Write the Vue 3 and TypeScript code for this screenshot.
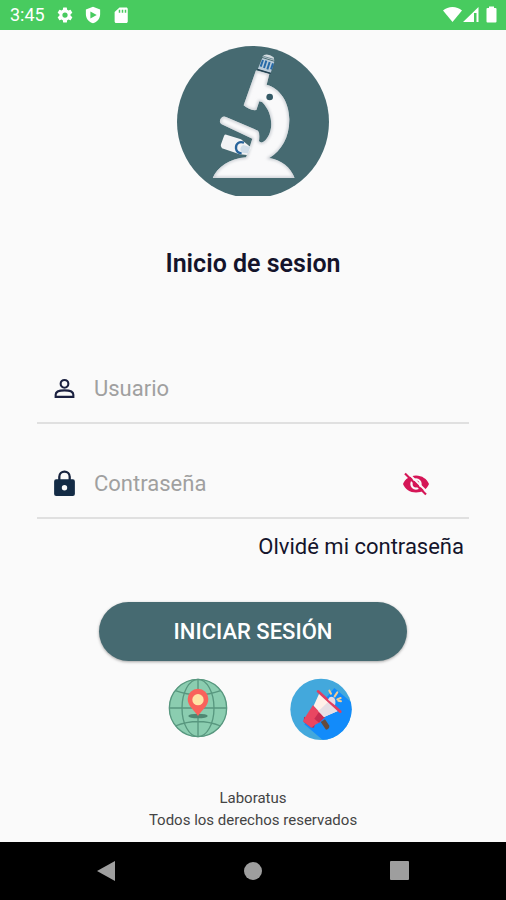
<script setup lang="ts">
import { ref } from 'vue'

const user = ref('')
const password = ref('')
const visible = ref(false)
</script>

<template>
  <div class="screen">
    <header class="status">
      <span class="time">3:45</span>
      <svg class="glyph" viewBox="0 0 24 24" aria-hidden="true">
        <path fill-rule="evenodd" d="M19.4 13a7.500 7.500 0 0 0 0-2l2.100-1.650a.5.5 0 0 0 .12-.64l-2-3.460a.5.5 0 0 0-.61-.22l-2.490 1a7.300 7.300 0 0 0-1.690-.98l-.38-2.650A.49.49 0 0 0 14 2h-4a.49.49 0 0 0-.49.420l-.38 2.650c-.61.250-1.170.59-1.690.98l-2.490-1a.49.49 0 0 0-.61.220l-2 3.460a.49.49 0 0 0 .12.640L4.570 11a7.900 7.900 0 0 0 0 2l-2.110 1.650a.5.5 0 0 0-.12.640l2 3.460c.12.220.39.300.61.220l2.490-1c.52.400 1.080.73 1.690.98l.38 2.650c.03.240.24.400.49.400h4c.25 0 .46-.18.49-.42l.38-2.650a7.700 7.700 0 0 0 1.690-.98l2.490 1c.23.090.49 0 .61-.22l2-3.460a.5.5 0 0 0-.12-.64zM12 15.500a3.500 3.500 0 1 1 0-7 3.500 3.500 0 0 1 0 7z" />
      </svg>
      <svg class="glyph" viewBox="0 0 24 24" aria-hidden="true">
        <path fill-rule="evenodd" d="M12 1 2.500 4.500V11c0 5.600 4 10.500 9.500 12 5.500-1.500 9.500-6.400 9.500-12V4.500zM8.500 7.200 17 12l-8.500 4.800z" />
      </svg>
      <svg class="glyph" viewBox="0 0 24 24" aria-hidden="true">
        <path fill-rule="evenodd" d="M19 2h-9L3.500 8v12.500c0 1.100.9 2 2 2H19c1.100 0 2-.9 2-2V4c0-1.100-.9-2-2-2zM9 5h2v4H9zm4 0h2v4h-2zm4 0h2v4h-2z" />
      </svg>
      <svg class="signals" viewBox="0 0 56 20" aria-hidden="true">
        <path d="M0 5.500C5 .8 14 .8 19 5.500L9.500 17z" />
        <path fill-rule="evenodd" d="M35.500 2v15H20zM31 8v9h2.500V8z" />
        <path d="M46 3V1.500h5V3h1.500q1 0 1 1v12.500q0 1-1 1h-8q-1 0-1-1V4q0-1 1-1z" />
      </svg>
    </header>

    <main class="content">
      <svg class="logo" viewBox="21 18 456 450" role="img" aria-label="Laboratus">
        <defs>
          <filter id="soft" x="-10%" y="-10%" width="120%" height="120%">
            <feGaussianBlur stdDeviation="5" />
          </filter>
          <clipPath id="scope">
            <path d="M258 91 298 102 290 134C330 145 357 185 358 237C359 290 335 332 298 354C335 360 362 382 374 414H128C142 381 178 356 228 352L232 342 240 318 247 296 155 253Q146 246 152 236Q158 227 168 231L264 272Q270 278 267 304Q276 312 286 301C309 277 313 225 277 187L268 184 259 210Q240 213 221 196Z" />
          </clipPath>
        </defs>
        <circle cx="249" cy="246" r="228" fill="#466a71" />
        <g clip-path="url(#scope)">
          <path fill="#f9f9fa" d="M120 80H380V420H120z" />
          <path class="shade" filter="url(#soft)" d="M258 91 298 102 290 134C330 145 357 185 358 237C359 290 335 332 298 354C335 360 362 382 374 414H128C142 381 178 356 228 352L232 342 240 318 247 296 155 253Q146 246 152 236Q158 227 168 231L264 272Q270 278 267 304Q276 312 286 301C309 277 313 225 277 187L268 184 259 210Q240 213 221 196Z" />
        </g>
        <path fill="#f1f2f4" d="m169 284 44 14 31 25-13 22-22-2-53-18q-6-5-3-12l9-25q2-5 7-4z" />
        <path fill="none" stroke="#28649b" stroke-width="7" d="M222 308c-15-5-25 3-24 17 1 9 8 14 17 15" />
        <path fill="#cfdde9" d="m219 315 22 6-7 19-18-2q-11-12 3-23z" />
        <circle cx="299" cy="171" r="10" fill="#355a66" />
        <path fill="#b9cbd8" d="m277 54 36 11-11 34-39-11z" />
        <path fill="none" stroke="#276aa7" stroke-width="6" d="m279 60-7 20m17-18-7 22m17-18-7 22m17-18-6 18" />
        <path fill="none" stroke="#233f50" stroke-width="4" d="m262 88 40 12" />
        <path fill="#d4dde1" d="m277 51 5-6q14-5 29 7l2 10z" />
        <path fill="none" stroke="#6f8d98" stroke-width="3" d="m280 49 31 9" />
      </svg>

      <h1 class="title">Inicio de sesion</h1>

      <form class="form" @submit.prevent>
        <div class="field">
          <label for="user" aria-label="Usuario">
            <svg class="icon" viewBox="0 0 24 24" aria-hidden="true">
              <g fill="none" stroke="#1b2140" stroke-width="2">
                <circle cx="12" cy="7.500" r="3.700" />
                <path d="M3.500 20v-2c0-3 4.500-4.200 8.500-4.200s8.500 1.200 8.500 4.200v2z" />
              </g>
            </svg>
          </label>
          <input id="user" v-model="user" type="text" placeholder="Usuario" autocomplete="username">
        </div>

        <div class="field">
          <label for="password" aria-label="Contraseña">
            <svg class="icon" viewBox="0 0 24 26" aria-hidden="true">
              <path fill="none" stroke="#17233e" stroke-width="2.200" d="M7 10V6.500a5 5 0 0 1 10 0V10" />
              <path fill="#132b45" fill-rule="evenodd" d="M4 9h16q2 0 2 2v12q0 2-2 2H4q-2 0-2-2V11q0-2 2-2zm8 5.500a2.600 2.600 0 1 0 0 5.200 2.600 2.600 0 0 0 0-5.200z" />
            </svg>
          </label>
          <input id="password" v-model="password" :type="visible ? 'text' : 'password'" placeholder="Contraseña" autocomplete="current-password">
          <button class="toggle" type="button" aria-label="Mostrar contraseña" @click="visible = !visible">
            <svg viewBox="0 0 28 24" aria-hidden="true">
              <path fill="#d51657" fill-rule="evenodd" d="M14 3.500C8 3.500 3 7 1 12c2 5 7 8.500 13 8.500S25 17 27 12c-2-5-7-8.500-13-8.500zm0 2.800a5.700 5.700 0 1 1 0 11.400 5.700 5.700 0 0 1 0-11.400zm0 2.300a3.400 3.400 0 1 0 0 6.800 3.400 3.400 0 0 0 0-6.800z" />
              <path fill="none" stroke="#fafafa" stroke-width="2" d="M5 0 26 21" />
              <path fill="none" stroke="#d51657" stroke-width="2.200" d="m3 1.500 21 21" />
            </svg>
          </button>
        </div>

        <a class="forgot" href="#">Olvidé mi contraseña</a>
        <button class="submit" type="submit">INICIAR SESIÓN</button>
      </form>

      <div class="shortcuts">
        <button type="button" aria-label="Ubicación">
          <svg viewBox="26 24 180 180" aria-hidden="true">
            <circle cx="116" cy="114" r="87" fill="#8bcdb0" />
            <g fill="none" stroke="#58977f" stroke-width="4">
              <circle cx="116" cy="114" r="86" />
              <ellipse cx="116" cy="114" rx="48" ry="86" />
              <path d="M116 28v172M30 114h172M48 62q68 25 136 0M48 168q68-27 136 0" />
            </g>
            <ellipse cx="116" cy="138" rx="29" ry="7" fill="#4e8873" />
            <path fill="#f9625b" d="M116 138C104 119 85 109 85 87a31 31 0 0 1 62 0c0 22-19 32-31 51z" />
            <circle cx="116" cy="89" r="17" fill="#ffe3a5" />
          </svg>
        </button>
        <button type="button" aria-label="Anuncios">
          <svg viewBox="31 26 186 186" aria-hidden="true">
            <defs>
              <clipPath id="disc"><circle cx="124" cy="120" r="92" /></clipPath>
            </defs>
            <g clip-path="url(#disc)">
              <path fill="#43a8dc" d="M30 25h190v190H30z" />
              <path fill="#128bfa" d="m164 56 60 50v110h-90l-60-51z" />
            </g>
            <path fill="#654b3d" d="m123 158 13-8 13 19q1 9-10 12z" />
            <path fill="#b92b50" d="m73 142 33 20-3 13-9-1-22-16z" />
            <path fill="#e94661" d="m100 107 36 36-18 17q-12 5-23 15l-25-19 7-13z" />
            <path fill="#c72d51" d="m118 128 18 15-18 17-14-12z" />
            <path fill="#fff1e9" d="m119 72 57 52-43 19-31-34z" />
            <path fill="#e6dfe5" d="m145 98 31 26-43 19-17-17z" />
            <path fill="none" stroke="#e13e60" stroke-width="8" stroke-linecap="round" d="m115 66 67 61" />
            <path fill="#e8dce3" d="M145 91q4-12 16-7 9 6 5 24z" />
            <g fill="none" stroke="#f3cc91" stroke-width="6" stroke-linecap="round">
              <path d="m149 64 5 9M173 69l-8 12M183 86l-10 4M184 96l-8-2" />
            </g>
          </svg>
        </button>
      </div>

      <footer class="legal">
        <p>Laboratus</p>
        <p>Todos los derechos reservados</p>
      </footer>
    </main>

    <nav class="navbar" aria-label="Sistema">
      <button type="button" aria-label="Atrás">
        <svg viewBox="0 0 24 24"><path d="M21 2v20L3 12z" /></svg>
      </button>
      <button type="button" aria-label="Inicio">
        <svg viewBox="0 0 24 24"><circle cx="12" cy="12" r="9" /></svg>
      </button>
      <button type="button" aria-label="Recientes">
        <svg viewBox="0 0 24 24"><rect x="2" y="2" width="19" height="19" rx="1" /></svg>
      </button>
    </nav>
  </div>
</template>

<style>
body {
  margin: 0;
  background: #fafafa;
}
</style>

<style scoped>
.screen {
  display: flex;
  flex-direction: column;
  min-height: 100vh;
  background: #fafafa;
  color: #14142b;
  font-family: Roboto, "Liberation Sans", sans-serif;
}

button {
  padding: 0;
  border: 0;
  background: none;
  font: inherit;
  cursor: pointer;
}

svg {
  display: block;
}

.status {
  display: flex;
  align-items: center;
  gap: 10px;
  box-sizing: border-box;
  height: 30px;
  padding: 0 7px 0 10px;
  background: #48cb5f;
  color: #fff;
  fill: #fff;
}

.time {
  font-size: 18px;
  line-height: 32px;
}

.glyph {
  width: 18px;
  height: 18px;
}

.time + .glyph {
  margin-left: 1px;
}

.signals {
  width: 56px;
  height: 20px;
  margin-left: auto;
}

.content {
  display: flex;
  flex: 1;
  flex-direction: column;
  align-items: center;
  padding: 16px 37px 0;
}

.logo {
  width: 152px;
  height: 150px;
}

.shade {
  fill: none;
  stroke: #b9bfc6;
  stroke-width: 6px;
}

.title {
  margin: 52px 0 0;
  font-size: 25px;
  font-weight: 600;
  line-height: 32px;
}

.form {
  display: flex;
  flex-direction: column;
  align-self: stretch;
  margin-top: 49px;
}

.field {
  display: flex;
  align-items: center;
  box-sizing: border-box;
  height: 95px;
  padding: 26px 39px 0 15px;
  border-bottom: 2px solid #e0e0e0;
}

.icon {
  width: 25px;
  height: 27px;
}

.field input {
  flex: 1;
  min-width: 0;
  margin-left: 17px;
  padding: 0;
  border: 0;
  outline: 0;
  background: none;
  color: inherit;
  font: inherit;
  font-size: 22px;
  line-height: 28px;
}

.field input::placeholder {
  color: #a0a0a0;
  opacity: 1;
}

.toggle svg {
  width: 28px;
  height: 24px;
}

.forgot {
  align-self: flex-end;
  margin: 13px 5px 0 0;
  color: inherit;
  font-size: 22px;
  line-height: 30px;
  text-decoration: none;
}

.submit {
  align-self: center;
  width: 308px;
  max-width: 100%;
  height: 59px;
  margin-top: 40px;
  border-radius: 30px;
  background: #466a71;
  box-shadow: 0 1px 3px rgb(0 0 0 / 35%);
  color: #fff;
  font-size: 22px;
  font-weight: 500;
}

.shortcuts {
  display: flex;
  align-items: flex-start;
  gap: 62px;
  margin: 17px 0 0 14px;
}

.shortcuts svg {
  width: 62px;
  height: 62px;
}

.shortcuts button:first-child svg {
  width: 60px;
  height: 60px;
}

.legal {
  margin: auto 0 11px;
  color: #444;
  font-size: 15px;
  line-height: 22px;
  text-align: center;
}

.legal p {
  margin: 0;
}

.navbar {
  display: grid;
  grid-template-columns: repeat(3, 1fr);
  height: 58px;
  padding: 0 33px;
  background: #000;
  fill: #9e9e9e;
}

.navbar button {
  display: grid;
  place-items: center;
}

.navbar svg {
  width: 24px;
  height: 24px;
}
</style>
